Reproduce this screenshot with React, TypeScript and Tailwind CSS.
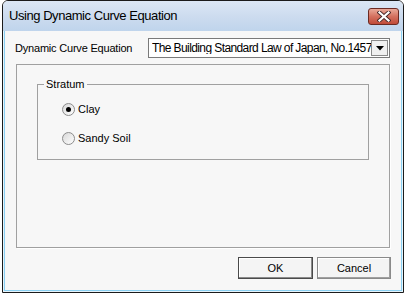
import React from "react";

function CloseX() {
  return (
    <svg width="14" height="11" viewBox="0 0 14 11">
      <path d="M2.5 1.5 L11.5 9.5 M11.5 1.5 L2.5 9.5" stroke="#4a2a2a" strokeWidth="4" strokeLinecap="square" />
      <path d="M2.5 1.5 L11.5 9.5 M11.5 1.5 L2.5 9.5" stroke="#ffffff" strokeWidth="2.2" strokeLinecap="square" />
    </svg>
  );
}

function Radio({ checked, label }: { checked?: boolean; label: string }) {
  return (
    <div className="flex items-center h-[14px]">
      <div className="w-[13px] h-[13px] rounded-full border border-[#8c8c8c] bg-gradient-to-br from-[#d8d8d8] to-[#ffffff] flex items-center justify-center">
        {checked && <div className="w-[5px] h-[5px] rounded-full bg-black" />}
      </div>
      <span className="ml-[3px] text-[11px] text-black leading-none">{label}</span>
    </div>
  );
}

export default function App() {
  const sys = { fontFamily: '"Liberation Sans", Arial, sans-serif' };
  return (
    <div className="w-[406px] h-[295px] bg-white" style={sys}>
      <div className="ml-[2px] w-[402px] h-[293px] border border-[#1b1b1b] rounded-t-[6px] overflow-hidden flex flex-col">
        {/* title bar */}
        <div className="h-[30px] shrink-0 bg-gradient-to-b from-[#dce7f5] via-[#cddcef] to-[#bfd4ec] flex items-start justify-between pl-[6px] pr-[4px]">
          <span className="mt-[7px] text-[13px] leading-[16px] tracking-[-0.45px] text-black">
            Using Dynamic Curve Equation
          </span>
          <div className="mt-[7px] w-[31px] h-[17px] rounded-[3px] border border-[#6b2a22] bg-gradient-to-b from-[#e8a898] via-[#d4705f] to-[#c04a38] flex items-center justify-center">
            <CloseX />
          </div>
        </div>
        {/* body */}
        <div className="flex-1 bg-[#e6f4fc] px-[1px] pb-[1px] flex">
          <div className="flex-1 bg-[#f7f7f7] border-l border-r border-b border-[#8ad0f2] flex flex-col">
            {/* row */}
            <div className="mt-[7px] h-[20px] flex items-center">
              <span className="ml-[10px] w-[133px] text-[11px] tracking-[-0.2px] text-black leading-none">Dynamic Curve Equation</span>
              <div className="w-[242px] h-[20px] border border-[#7a7a7a] bg-white flex items-center overflow-hidden">
                <span className="ml-[3px] flex-1 text-[12px] tracking-[-0.6px] leading-none text-black whitespace-nowrap overflow-hidden">
                  The Building Standard Law of Japan, No.1457
                </span>
                <div className="w-[17px] h-[16px] mr-[1px] border border-[#8a8a8a] bg-[#f0f0f0] flex items-center justify-center shrink-0">
                  <svg width="8" height="5" viewBox="0 0 8 5">
                    <path d="M0 0 L8 0 L4 4.5 Z" fill="#000" />
                  </svg>
                </div>
              </div>
            </div>
            {/* panel */}
            <div className="ml-[11px] mt-[6px] w-[374px] h-[184px] border border-[#a0a0a0] shadow-[1px_1px_0_#ffffff]">
              <div className="ml-[20px] mt-[19px] w-[332px] h-[76px] border border-[#a0a0a0] relative">
                <span className="absolute left-[6px] top-[-8px] px-[2px] bg-[#f7f7f7] text-[11px] leading-[14px] text-black">
                  Stratum
                </span>
                <div className="ml-[24px] mt-[17px] flex flex-col gap-[15px]">
                  <Radio checked label="Clay" />
                  <Radio label="Sandy Soil" />
                </div>
              </div>
            </div>
            {/* buttons */}
            <div className="mt-[9px] flex justify-end gap-[4px] mr-[10px]">
              <div className="w-[75px] h-[22px] border border-[#4a4a4a] bg-[#f4f4f4] shadow-[inset_-1px_-1px_0_#8a8a8a,inset_1px_1px_0_#ffffff] flex items-center justify-center text-[11px] text-black">
                OK
              </div>
              <div className="w-[74px] h-[22px] border border-[#8a8a8a] bg-[#f4f4f4] shadow-[inset_-1px_-1px_0_#a0a0a0,inset_1px_1px_0_#ffffff] flex items-center justify-center text-[11px] text-black">
                Cancel
              </div>
            </div>
          </div>
        </div>
      </div>
    </div>
  );
}
